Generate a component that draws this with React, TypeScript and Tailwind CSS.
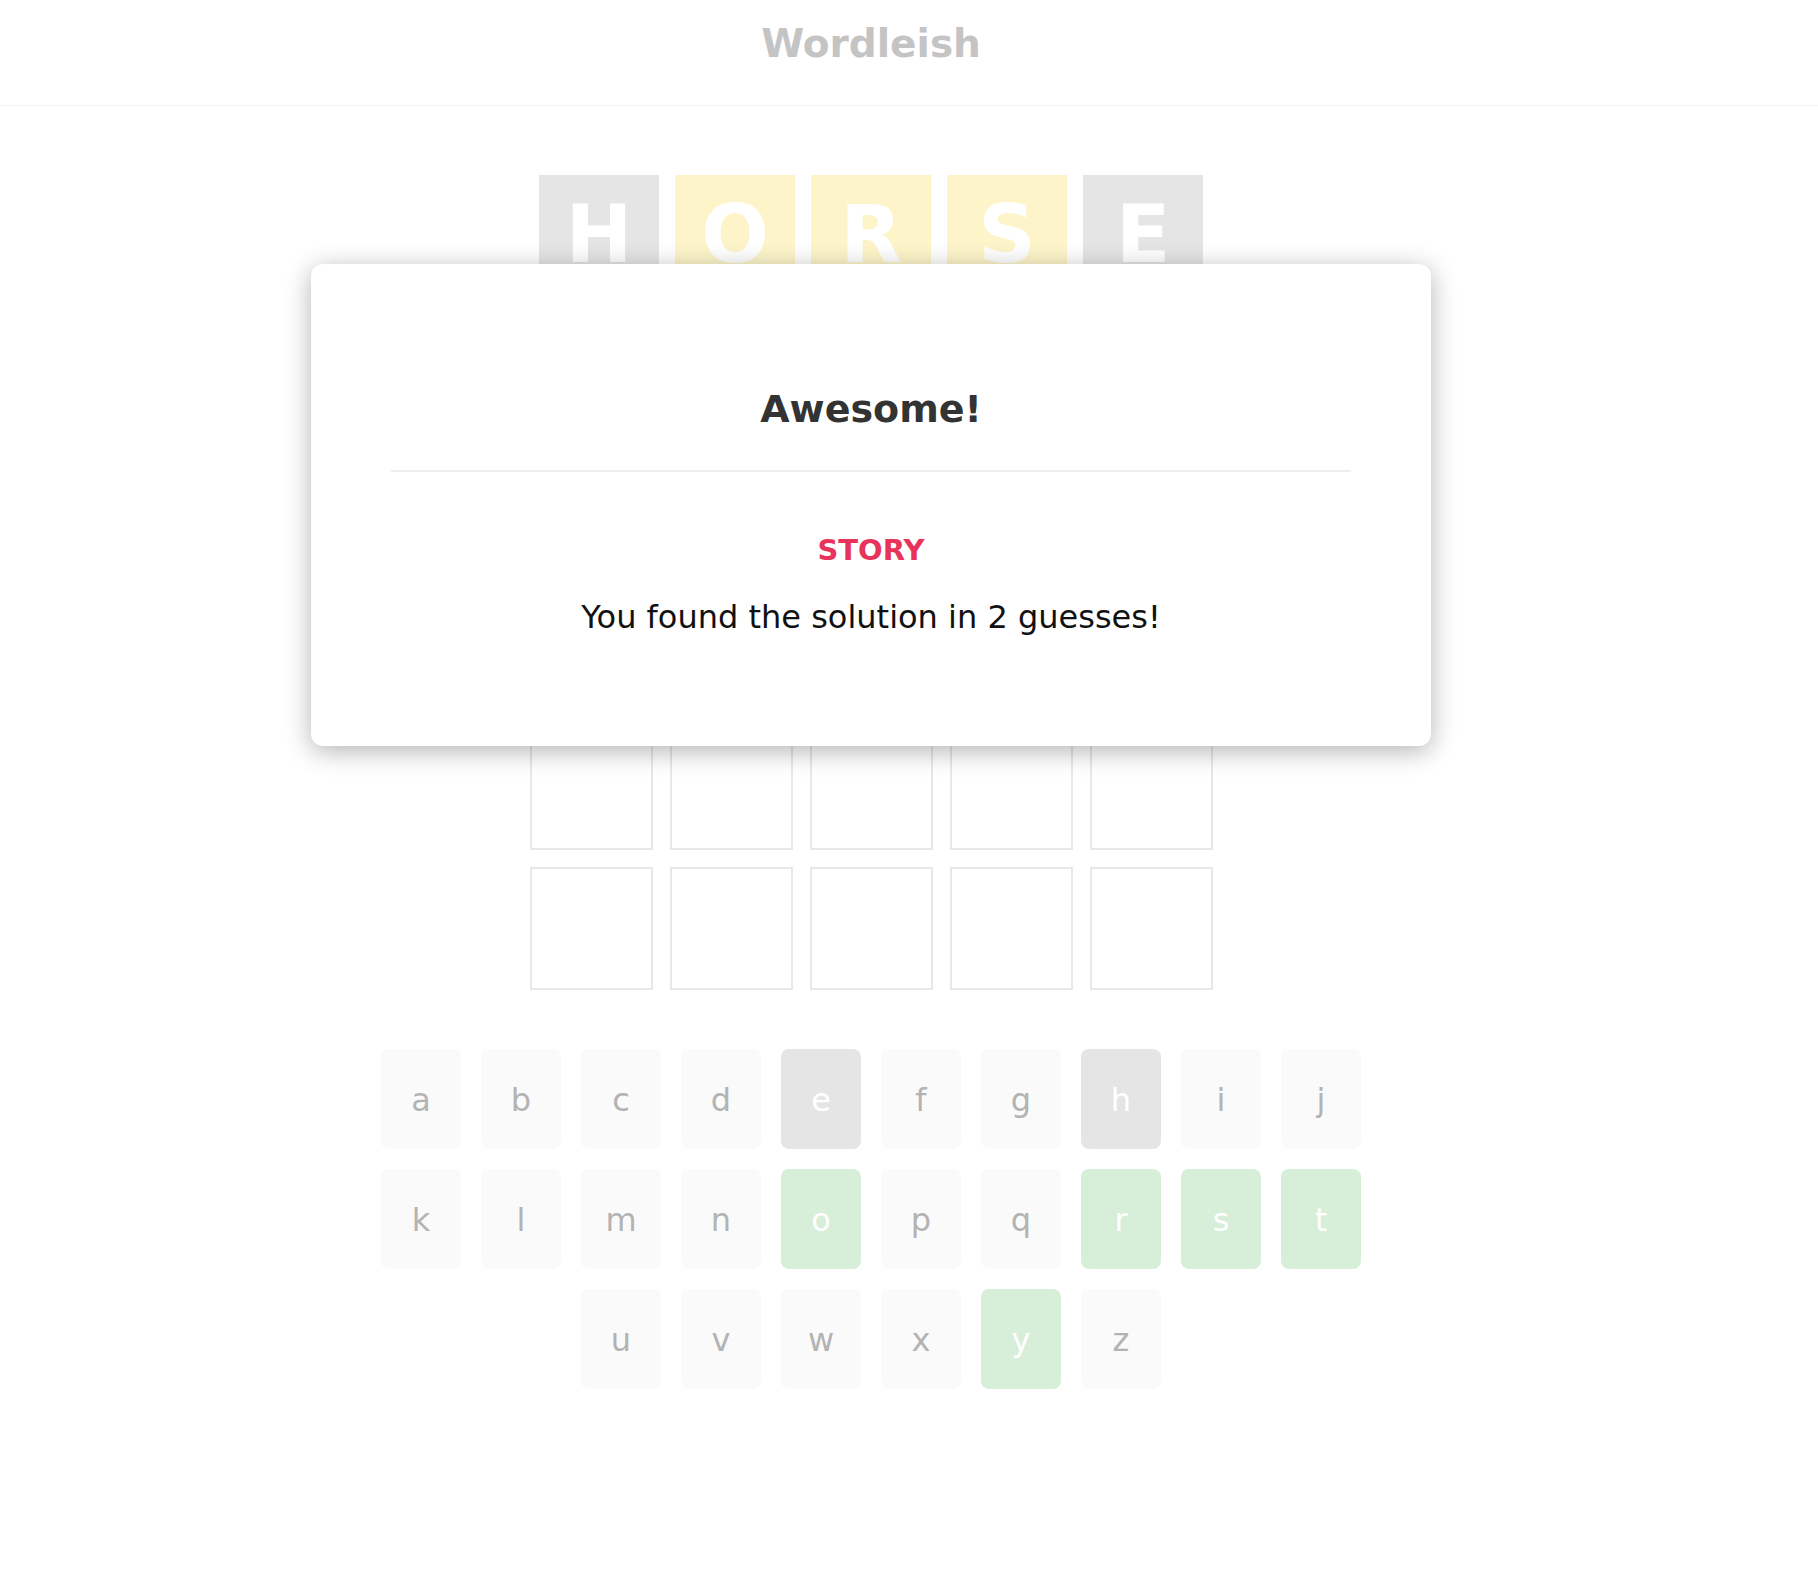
import React from 'react';

type TileState = 'absent' | 'present' | 'correct' | 'empty';

const guesses: { letter: string; state: TileState }[][] = [
  [
    { letter: 'H', state: 'absent' },
    { letter: 'O', state: 'present' },
    { letter: 'R', state: 'present' },
    { letter: 'S', state: 'present' },
    { letter: 'E', state: 'absent' },
  ],
  // second guess sits under the modal, so its letters are never seen
  [
    { letter: '', state: 'correct' },
    { letter: '', state: 'correct' },
    { letter: '', state: 'correct' },
    { letter: '', state: 'correct' },
    { letter: '', state: 'correct' },
  ],
];

const keyRows = ['abcdefghij', 'klmnopqrst', 'uvwxyz'];
const absentKeys = ['e', 'h'];
const correctKeys = ['o', 'r', 's', 't', 'y'];

const tileColor: Record<TileState, string> = {
  absent: 'bg-[#e5e5e5]',
  present: 'bg-[#fdf5c9]',
  correct: 'bg-[#d7eed9]',
  empty: 'bg-white',
};

const Tile: React.FC<{ letter: string; state: TileState }> = ({ letter, state }) => (
  <div
    className={`w-[120px] h-[120px] flex items-center justify-center text-white font-bold text-[80px] leading-none ${tileColor[state]}`}
  >
    {letter}
  </div>
);

const EmptyRow: React.FC = () => (
  <div className="flex gap-[17px]">
    {[0, 1, 2, 3, 4].map((i) => (
      <div key={i} className="w-[123px] h-[123px] border-2 border-[#e8e8e8] bg-white" />
    ))}
  </div>
);

const Key: React.FC<{ letter: string }> = ({ letter }) => {
  let style = 'bg-[#fafafa] text-[#b3b3b3]';
  if (absentKeys.includes(letter)) style = 'bg-[#e5e5e5] text-white';
  if (correctKeys.includes(letter)) style = 'bg-[#d7eed9] text-white';
  return (
    <div
      className={`w-[80px] h-[100px] pt-[2px] rounded-[8px] flex items-center justify-center text-[32px] leading-none ${style}`}
    >
      {letter}
    </div>
  );
};

const App: React.FC = () => {
  return (
    <div
      className="relative min-h-[1594px] bg-white"
      style={{ fontFamily: '"DejaVu Sans", Verdana, sans-serif' }}
    >
      <header className="h-[106px] border-b border-[#f3f3f3]">
        <div className="w-[1742px] pt-[21px] text-center">
          <h1 className="text-[39px] leading-[46px] font-bold text-[#c4c4c4]">Wordleish</h1>
        </div>
      </header>

      <main className="w-[1742px] flex flex-col items-center">
        <div className="mt-[69px] flex flex-col items-center">
          {guesses.map((row, r) => (
            <div key={r} className="flex gap-[16px] mb-[16px]">
              {row.map((t, i) => (
                <Tile key={i} letter={t.letter} state={t.state} />
              ))}
            </div>
          ))}
          <div className="flex flex-col gap-[17px]">
            <EmptyRow />
            <EmptyRow />
            <EmptyRow />
            <EmptyRow />
          </div>
        </div>

        <div className="mt-[59px] flex flex-col items-center gap-[20px]">
          {keyRows.map((row) => (
            <div key={row} className="flex gap-[20px]">
              {row.split('').map((l) => (
                <Key key={l} letter={l} />
              ))}
            </div>
          ))}
        </div>
      </main>

      {/* result modal */}
      <div className="absolute inset-0">
        <div className="w-[1742px] flex justify-center pt-[264px]">
          <div className="w-[1120px] bg-white rounded-[12px] shadow-[0_5px_26px_rgba(0,0,0,0.3)] px-[80px] pt-[122px] pb-[110px] text-center">
            <h2 className="text-[38px] leading-[46px] font-bold text-[#333333]">Awesome!</h2>
            <div className="mt-[38px] h-[2px] bg-[#eeeeee]" />
            <div className="mt-[62px] text-[29px] leading-[32px] font-bold text-[#e8335a]">STORY</div>
            <p className="mt-[32px] text-[32px] leading-[38px] text-[#111111]">
              You found the solution in 2 guesses!
            </p>
          </div>
        </div>
      </div>
    </div>
  );
};

export default App;
